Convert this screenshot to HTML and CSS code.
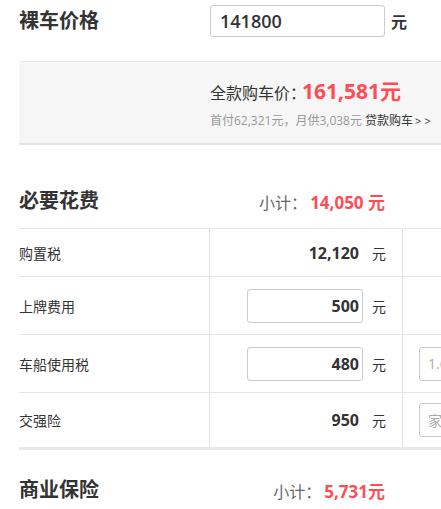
FILE: index.html
```html
<!DOCTYPE html>
<html lang="zh">
<head>
<meta charset="utf-8">
<title>购车计算</title>
<link rel="stylesheet" href="styles.css">
</head>
<body>
<div class="page">
  <div class="price-row">
    <h2 class="title">裸车价格</h2>
    <input class="price-input" type="text" value="141800">
    <span class="unit-bold">元</span>
  </div>

  <div class="total-box">
    <div class="total-line"><span class="total-label">全款购车价：</span><span class="total-value">161,581元</span></div>
    <div class="loan-line"><span class="loan-info">首付62,321元，月供3,038元</span> <a class="loan-link" href="#">贷款购车<span class="arrows">&gt;&gt;</span></a></div>
  </div>

  <div class="section-head">
    <h3 class="title">必要花费</h3>
    <div class="subtotal"><span class="sub-label">小计：</span><span class="sub-value">14,050 元</span></div>
  </div>

  <div class="fee-table">
    <div class="fee-row row-short">
      <div class="cell-label">购置税</div>
      <div class="cell-value"><span class="value-box">12,120</span><span class="unit">元</span></div>
      <div class="cell-extra"></div>
    </div>
    <div class="fee-row">
      <div class="cell-label">上牌费用</div>
      <div class="cell-value"><input class="value-input" type="text" value="500"><span class="unit">元</span></div>
      <div class="cell-extra"></div>
    </div>
    <div class="fee-row">
      <div class="cell-label">车船使用税</div>
      <div class="cell-value"><input class="value-input" type="text" value="480"><span class="unit">元</span></div>
      <div class="cell-extra"><input class="extra-input" type="text" placeholder="1.6L(含)-2.0L(含)"></div>
    </div>
    <div class="fee-row row-last">
      <div class="cell-label">交强险</div>
      <div class="cell-value"><span class="value-box">950</span><span class="unit">元</span></div>
      <div class="cell-extra"><input class="extra-input" type="text" placeholder="家用6座以下"></div>
    </div>
  </div>

  <div class="section-head section-head-2">
    <h3 class="title">商业保险</h3>
    <div class="subtotal"><span class="sub-label">小计：</span><span class="sub-value">5,731元</span></div>
  </div>
</div>
</body>
</html>
```

FILE: styles.css
```css
html, body {
  margin: 0;
  padding: 0;
  overflow: hidden;
  background: #fff;
}

body {
  font-family: "Open Sans", "Noto Sans CJK SC", sans-serif;
  color: #333;
}

.page {
  width: 441px;
  padding-left: 19px;
  box-sizing: border-box;
  overflow: hidden;
}

.title {
  margin: 0;
  font-size: 20px;
  font-weight: 700;
  color: #333;
  line-height: 32px;
}

.price-row {
  display: flex;
  align-items: center;
  padding-top: 5px;
  height: 32px;
}

.price-row .title {
  width: 191px;
  flex: none;
}

.price-input {
  box-sizing: border-box;
  width: 175px;
  height: 32px;
  border: 1px solid #ccc;
  border-radius: 3px;
  padding: 0 9px;
  font-family: "Open Sans", sans-serif;
  font-size: 18px;
  font-weight: 600;
  color: #333;
  outline: none;
}

.unit-bold {
  margin-left: 6px;
  font-size: 16px;
  font-weight: 700;
}

.total-box {
  margin-top: 24px;
  height: 81px;
  box-sizing: content-box;
  border-top: 1px solid #e6e6e6;
  border-bottom: 2px solid #e2e2e2;
  background: #f6f6f6;
  padding-left: 191px;
}

.total-line {
  display: flex;
  align-items: baseline;
  height: 26px;
  line-height: 26px;
  margin-top: 16px;
}

.total-label {
  font-size: 16px;
  color: #333;
}

.total-value {
  margin-left: -4px;
  font-size: 21px;
  font-weight: 700;
  color: #fd4d56;
}

.loan-line {
  margin-top: 8px;
  line-height: 18px;
  font-size: 12px;
  white-space: nowrap;
}

.loan-info {
  color: #999;
}

.loan-link {
  color: #333;
  text-decoration: none;
}

.arrows {
  margin-left: 2px;
  letter-spacing: 3px;
  font-size: 11px;
}

.section-head {
  display: flex;
  align-items: center;
  justify-content: space-between;
  width: 366px;
  height: 44px;
  margin-top: 34px;
}

.section-head-2 {
  margin-top: 18px;
}

.subtotal {
  display: flex;
  align-items: baseline;
}

.sub-label {
  font-size: 16px;
  color: #666;
}

.sub-value {
  margin-left: 3px;
  font-size: 17px;
  font-weight: 700;
  color: #fd4d56;
}

.fee-table {
  margin-top: 5px;
  border-bottom: 3px solid #e8e8e8;
}

.fee-row {
  display: flex;
  height: 58px;
  box-sizing: border-box;
  border-top: 1px solid #e5e5e5;
}

.row-short {
  height: 48px;
}

.row-last {
  height: 55px;
}

.cell-label {
  box-sizing: border-box;
  width: 191px;
  flex: none;
  border-right: 1px solid #e0e0e0;
  display: flex;
  align-items: center;
  font-size: 14px;
  color: #333;
}

.cell-value {
  box-sizing: border-box;
  width: 193px;
  flex: none;
  border-right: 1px solid #e0e0e0;
  display: flex;
  align-items: center;
  justify-content: flex-end;
  padding-right: 16px;
}

.value-box {
  box-sizing: border-box;
  width: 116px;
  padding-right: 4px;
  text-align: right;
  font-size: 16px;
  font-weight: 700;
  color: #333;
}

.value-input {
  box-sizing: border-box;
  width: 116px;
  height: 34px;
  border: 1px solid #ccc;
  border-radius: 3px;
  padding: 0 3px 0 6px;
  text-align: right;
  font-family: "Open Sans", sans-serif;
  font-size: 16px;
  font-weight: 700;
  color: #333;
  outline: none;
}

.unit {
  margin-left: 9px;
  font-size: 14px;
  color: #333;
}

.cell-extra {
  flex: 1;
  min-width: 0;
  display: flex;
  align-items: center;
  padding-left: 16px;
  overflow: hidden;
}

.extra-input {
  box-sizing: border-box;
  flex: none;
  width: 180px;
  height: 34px;
  border: 1px solid #ccc;
  border-radius: 3px;
  padding: 0 8px;
  font-family: "Open Sans", "Noto Sans CJK SC", sans-serif;
  font-size: 14px;
  color: #333;
  outline: none;
}

.extra-input::placeholder {
  color: #aaa;
}
```
